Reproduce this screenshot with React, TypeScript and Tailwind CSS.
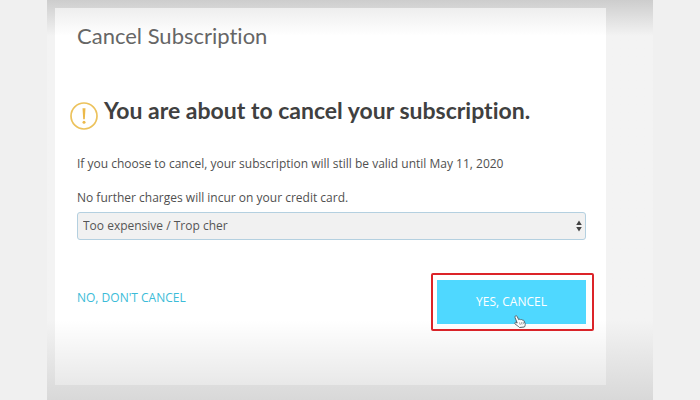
import { useState } from "react";

const reasons = [
  "Too expensive / Trop cher",
  "Not using it enough / Peu utilisé",
  "Other / Autre",
];

function WarningIcon() {
  return (
    <svg
      viewBox="0 0 28 28"
      className="mt-1 h-7 w-7 shrink-0"
      fill="none"
      aria-hidden="true"
    >
      <circle cx="14" cy="14" r="13" stroke="#ecc25c" strokeWidth="1.7" />
      <path d="M12.5 6.2h3l-.7 11h-1.6z" fill="#ecb94a" />
      <circle cx="14" cy="20.2" r="1.5" fill="#ecb94a" />
    </svg>
  );
}

function SelectArrows() {
  return (
    <svg
      viewBox="0 0 6 12"
      className="pointer-events-none absolute top-2 right-1 h-3 w-1.5"
      aria-hidden="true"
    >
      <path d="M3 0.4 5.8 5H0.2zM3 11.6 0.2 7h5.6z" fill="#444" />
    </svg>
  );
}

function HandCursor() {
  return (
    <svg
      viewBox="0 0 12 13"
      className="pointer-events-none absolute top-[35px] left-[77px] h-[13px] w-3"
      aria-hidden="true"
    >
      <path
        d="M1.2 1.2C2 .3 2.9.8 3.3 1.7L4.6 4.6c.5-.6 1.4-.5 1.8.2.6-.5 1.5-.3 1.8.4.7-.4 1.5 0 1.8.7l1.1 2.5c.3 1.5 0 2.5-.7 3.6L5.5 12.5C4.5 11.3 2.5 10.2 1 8.8.3 8 1 7.2 1.9 7.4l1.3.6L1.1 2.7c-.2-.5-.3-1.1.1-1.5z"
        fill="#fff"
        stroke="#55636b"
        strokeWidth="1"
        strokeLinejoin="round"
      />
      <path
        d="M5.5 7.5l.8 2.4M7.3 7.2l.8 2.3M9 7l.6 1.8"
        stroke="#6d777c"
        strokeWidth=".7"
      />
    </svg>
  );
}

export default function App() {
  const [reason, setReason] = useState(reasons[0]);

  return (
    <div className="flex min-h-screen bg-[#f0f0f0] px-[47px] font-['Open_Sans',sans-serif] text-xs text-[#505050] [font-variant-ligatures:none]">
      <div className="relative flex flex-1 bg-[#f3f3f3] bg-linear-to-b from-[#cdcdcd] to-[#f3f3f3] to-[36px] pt-2 pr-[47px] pb-[15px] pl-2">
        <main className="flex-1 bg-linear-to-b from-[#eeeeee] to-white to-[28px] pt-[14px] pr-5 pl-[22px]">
          <h1 className="font-['Lato',sans-serif] text-[22px] leading-7 text-[#666]">
            Cancel Subscription
          </h1>

          <div className="mt-12 -ml-[7px] flex gap-[6px]">
            <WarningIcon />
            <h2 className="font-['Lato',sans-serif] text-[23px] leading-6 font-bold text-[#404040]">
              You are about to cancel your subscription.
            </h2>
          </div>

          <p className="mt-6 leading-5">
            If you choose to cancel, your subscription will still be valid until
            May 11, 2020
          </p>
          <label htmlFor="reason" className="mt-[14px] block leading-5">
            No further charges will incur on your credit card.
          </label>

          <div className="relative mt-1">
            <select
              id="reason"
              value={reason}
              onChange={(e) => setReason(e.target.value)}
              className="block h-7 w-full appearance-none rounded-[3px] border border-[#b4d0e0] bg-[#f1f1f1] px-[5px] text-[#555] outline-none"
            >
              {reasons.map((r) => (
                <option key={r}>{r}</option>
              ))}
            </select>
            <SelectArrows />
          </div>

          <div className="mt-10 flex items-start justify-between">
            <a href="#keep" className="mt-2 leading-5 text-[#3bbcd8]">
              NO, DON'T CANCEL
            </a>
            <div className="relative">
              <button
                type="button"
                className="block h-11 w-[149px] cursor-pointer bg-[#4fd8ff] text-white"
              >
                YES, CANCEL
              </button>
              <div className="pointer-events-none absolute -inset-x-2 -inset-y-[7px] -left-1.5 rounded-[2px] border-2 border-[#dc2429]" />
              <HandCursor />
            </div>
          </div>
        </main>

        <div className="pointer-events-none absolute inset-x-0 bottom-0 h-20 bg-linear-to-b from-transparent to-black/11" />
      </div>
    </div>
  );
}
